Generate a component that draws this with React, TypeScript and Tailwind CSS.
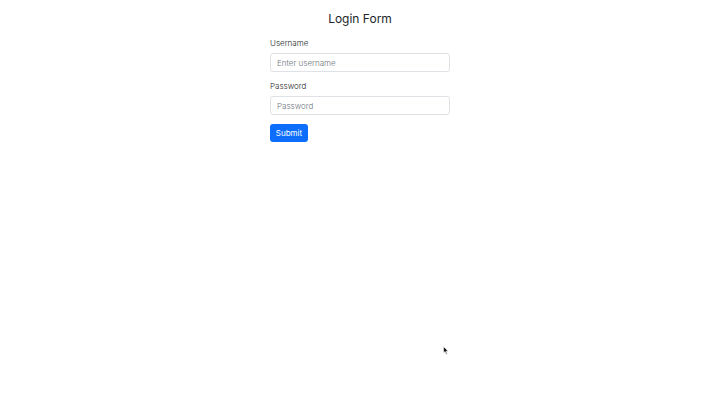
export default function App() {
  return (
    <div className="relative min-h-[405px] w-full bg-white font-['Inter','Liberation_Sans',sans-serif] text-[#212529]">
      <div className="mx-auto flex w-[180px] flex-col pt-[11px]">
        <h2 className="mb-[10px] text-center text-[12px] leading-[16px] font-normal">Login Form</h2>

        <label className="mb-[4px] block text-[8px] leading-[12px] font-light">Username</label>
        <input
          type="text"
          placeholder="Enter username"
          className="mb-[8px] h-[19px] w-full rounded-[3px] border border-[#dee2e6] px-[6px] text-[8px] font-light outline-none placeholder:text-[#6c757d]"
        />

        <label className="mb-[4px] block text-[8px] leading-[12px] font-light">Password</label>
        <input
          type="password"
          placeholder="Password"
          className="mb-[9px] h-[19px] w-full rounded-[3px] border border-[#dee2e6] px-[6px] text-[8px] font-light outline-none placeholder:text-[#6c757d]"
        />

        <div className="flex">
          <button className="h-[18px] w-[38px] rounded-[3px] bg-[#0d6efd] text-[8px] leading-[18px] text-white">
            Submit
          </button>
        </div>
      </div>

      {/* mouse pointer */}
      <svg className="absolute left-[443px] top-[346px]" width="6" height="9" viewBox="0 0 6 9">
        <path d="M0.5 0.5 L0.5 7 L2 5.6 L3.2 8.3 L4.2 7.9 L3 5.2 L5.2 5.2 Z" fill="#111" stroke="#fff" strokeWidth="0.6" />
      </svg>
    </div>
  );
}
